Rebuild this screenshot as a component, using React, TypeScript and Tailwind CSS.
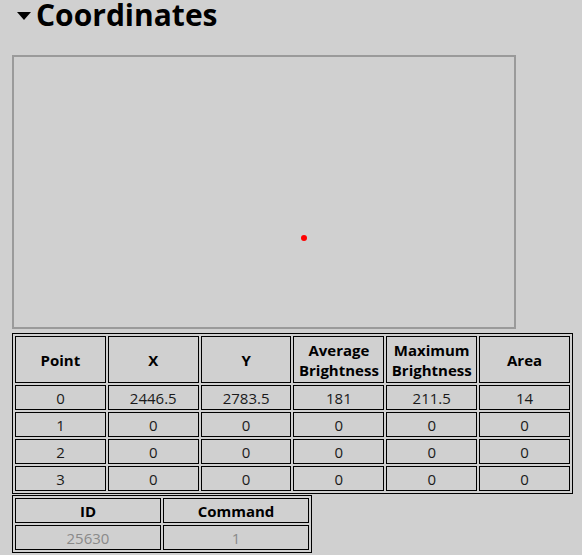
import React from 'react';

const headers = ['Point', 'X', 'Y', 'Average Brightness', 'Maximum Brightness', 'Area'];

const rows: (string | number)[][] = [
    [0, '2446.5', '2783.5', 181, '211.5', 14],
    [1, 0, 0, 0, 0, 0],
    [2, 0, 0, 0, 0, 0],
    [3, 0, 0, 0, 0, 0],
];

export default function App() {
    return (
        <div className="min-h-[555px] w-[582px] bg-[#d0d0d0] text-black" style={{ fontFamily: '"Open Sans", "Noto Sans", sans-serif' }}>
            {/* Section header */}
            <div className="flex items-center h-[30px] pl-[17px] gap-[5px]">
                <svg width="14" height="8" viewBox="0 0 14 8" className="mt-[1px] shrink-0">
                    <polygon points="0,0 14,0 7,8" fill="#000" />
                </svg>
                <span className="text-[30px] font-bold leading-[30px] whitespace-nowrap">Coordinates</span>
            </div>

            <div className="pl-3 pt-[25px]">
                {/* Canvas */}
                <div className="relative w-[504px] h-[274px] border-2 border-[#9a9a9a]">
                    <span className="absolute left-[287px] top-[178px] w-[6px] h-[6px] rounded-full bg-[#ff0000]" />
                </div>

                {/* Points table */}
                <table className="mt-[4px] w-[561px] table-fixed border-separate border-spacing-[2px] border border-black text-[15px]">
                    <thead>
                        <tr>
                            {headers.map(h => (
                                <th key={h} className="h-[47px] p-0 border border-black font-bold leading-[20px] text-center">
                                    {h.includes(' ') ? (
                                        <>
                                            {h.split(' ')[0]}
                                            <br />
                                            {h.split(' ')[1]}
                                        </>
                                    ) : h}
                                </th>
                            ))}
                        </tr>
                    </thead>
                    <tbody>
                        {rows.map((r, i) => (
                            <tr key={i}>
                                {r.map((c, j) => (
                                    <td key={j} className="h-[25px] p-0 border border-black text-center leading-[20px] text-[#1a1a1a]">
                                        {c}
                                    </td>
                                ))}
                            </tr>
                        ))}
                    </tbody>
                </table>

                {/* Command table */}
                <table className="mt-[1px] w-[300px] table-fixed border-separate border-spacing-[2px] border border-black text-[15px]">
                    <thead>
                        <tr>
                            <th className="h-[25px] p-0 border border-black font-bold leading-[20px] text-center">ID</th>
                            <th className="h-[25px] p-0 border border-black font-bold leading-[20px] text-center">Command</th>
                        </tr>
                    </thead>
                    <tbody>
                        <tr>
                            <td className="h-[25px] p-0 border border-black text-center leading-[20px] text-[#8a8a8a]">25630</td>
                            <td className="h-[25px] p-0 border border-black text-center leading-[20px] text-[#8a8a8a]">1</td>
                        </tr>
                    </tbody>
                </table>
            </div>
        </div>
    );
}
